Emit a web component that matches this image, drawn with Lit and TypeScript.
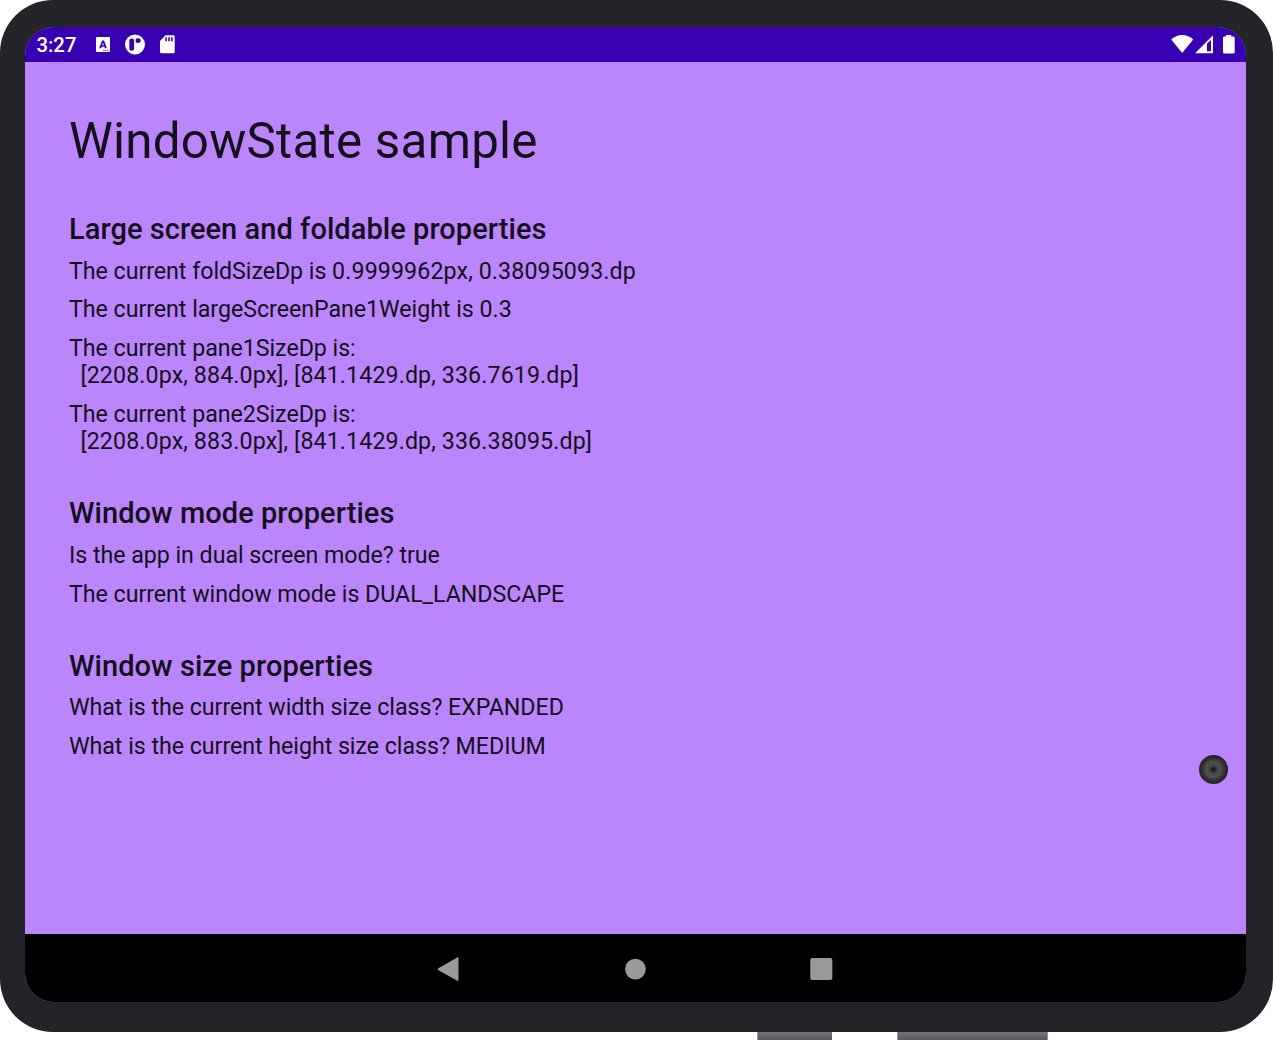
import { LitElement, html, css } from "lit";
import { customElement } from "lit/decorators.js";

const SECTIONS = [
  {
    title: "Large screen and foldable properties",
    lines: [
      "The current foldSizeDp is 0.9999962px, 0.38095093.dp",
      "The current largeScreenPane1Weight is 0.3",
      "The current pane1SizeDp is:\n  [2208.0px, 884.0px], [841.1429.dp, 336.7619.dp]",
      "The current pane2SizeDp is:\n  [2208.0px, 883.0px], [841.1429.dp, 336.38095.dp]",
    ],
  },
  {
    title: "Window mode properties",
    lines: ["Is the app in dual screen mode? true", "The current window mode is DUAL_LANDSCAPE"],
  },
  {
    title: "Window size properties",
    lines: [
      "What is the current width size class? EXPANDED",
      "What is the current height size class? MEDIUM",
    ],
  },
];

// Measured values are set slightly wider than the prose that introduces them.
const withValues = (text: string) =>
  text.split("\n").map(
    (row) =>
      html`<span class="row">${row
        .split(/(\[.*\]|\d+\.\d+.*$)/)
        .map((part, i) => (i % 2 ? html`<span class="value">${part}</span>` : part))}</span>`
  );

@customElement("status-bar")
class StatusBar extends LitElement {
  static styles = css`
    :host { display: flex; align-items: center; height: 35px; box-sizing: border-box; background: #3700b3; color: #fff; padding: 1px 10px 0 11.5px; }
    .time { font: 500 20.3px/34px Roboto, sans-serif; width: 55.5px; }
    svg { display: block; fill: #fff; }
    .spacer { flex: 1; }
  `;
  render() {
    return html`
      <span class="time">3:27</span>
      <svg width="90" height="34" viewBox="92 28 90 34">
        <rect x="96" y="37" width="14" height="15" rx="1" />
        <path d="M99.2 48.2 102.1 40.4h1.9l2.9 7.8h-2l-.5-1.5h-2.7l-.5 1.5zM102.2 45.2h1.7l-.85-2.5z" fill="#3700b3" />
        <path d="M103 50.3h6" stroke="#3700b3" stroke-width=".8" stroke-dasharray="1.3 .5" />
        <circle cx="135" cy="44.5" r="10" />
        <rect x="129.3" y="38.6" width="4.8" height="12.2" rx="2.2" fill="#3700b3" />
        <path d="M135.7 38.6h1.2v4h-1.2z" fill="#3700b3" />
        <circle cx="138.3" cy="40.7" r="2.4" fill="#3700b3" />
        <path d="M165.5 35.3h7.8q1.4 0 1.4 1.4v15.2q0 1.4-1.4 1.4h-11.8q-1.5 0-1.5-1.4V41z" />
        <path d="M165.3 37.2h1.6v4h-1.6zM168.2 37.2h1.6v4h-1.6zM171.1 37.2h1.6v4h-1.6z" fill="#3700b3" />
      </svg>
      <span class="spacer"></span>
      <svg width="66" height="34" viewBox="1170 28 66 34">
        <path d="M1182.2 53 1171.2 39.5Q1176 35 1182.2 35T1193.2 39.5z" />
        <path fill-rule="evenodd" d="M1195 53.3 1213 35.2V53.3zM1207 43.5V51.3H1211V40z" />
        <path d="M1226.2 35h5v1.6h2q1.5 0 1.5 1.4v14q0 1.5-1.5 1.5h-8.7q-1.5 0-1.5-1.5V38q0-1.4 1.5-1.4h1.7z" />
      </svg>
    `;
  }
}

@customElement("nav-bar")
class NavBar extends LitElement {
  static styles = css`
    :host { display: flex; justify-content: center; height: 68px; background: #000; }
    svg { display: block; fill: #9a9a9a; }
  `;
  render() {
    return html`
      <svg width="411" height="68" viewBox="430 934 411 68">
        <path d="M438.4 968.2 457.3 957.5q1.2-.5 1.2.8v21.7q0 1.3-1.2.8L438.4 970.2q-1.3-1 0-2z" />
        <circle cx="635.4" cy="969.1" r="10.4" />
        <rect x="810.3" y="958" width="22" height="22" rx="1.8" />
      </svg>
    `;
  }
}

@customElement("app-root")
class AppRoot extends LitElement {
  static styles = css`
    :host { display: block; width: 1273px; height: 1040px; background: #fff; overflow: hidden; font-family: Roboto, sans-serif; color: #140f1c; }
    .device { box-sizing: border-box; height: 1032px; padding: 27px 27px 30px 25px; background: #242329; border-radius: 53px; }
    .screen { display: flex; flex-direction: column; height: 975px; border-radius: 29px; overflow: hidden; background: #bb86fc; position: relative; }
    .content { flex: 1; box-sizing: border-box; padding: 50px 44px 0; }
    h1, h2, p { margin: 0; }
    h1 { font-size: 49.3px; font-weight: 400; line-height: 58px; letter-spacing: .27px; padding-bottom: 1.3px; }
    section { margin-top: 40.8px; }
    h2 { font-size: 29px; font-weight: 500; line-height: 34px; letter-spacing: .05px; }
    p { font-size: 23.2px; line-height: 27.15px; letter-spacing: -.03px; margin-top: 11.6px; white-space: pre; }
    .row { display: block; }
    .value { letter-spacing: .12px; }
    .camera { position: absolute; left: 1173.5px; top: 727.5px; width: 29px; height: 29px; border-radius: 50%; background: radial-gradient(circle closest-side, #111 0, #222 12%, #484848 30%, #505050 50%, #303030 78%, #202020 100%); }
    .keys { display: flex; gap: 65px; padding-left: 757px; }
    .key { height: 8px; background: linear-gradient(#747474, #585858); box-sizing: border-box; border-left: 1px solid #999; }
    .power { width: 75px; }
    .volume { width: 151px; border-right: 1px solid #999; }
  `;
  render() {
    return html`
      <div class="device">
        <div class="screen">
          <status-bar></status-bar>
          <main class="content">
            <h1>WindowState sample</h1>
            ${SECTIONS.map(
              (s) => html`<section><h2>${s.title}</h2>${s.lines.map((l) => html`<p>${withValues(l)}</p>`)}</section>`
            )}
          </main>
          <nav-bar></nav-bar>
          <div class="camera"></div>
        </div>
      </div>
      <div class="keys"><div class="key power"></div><div class="key volume"></div></div>
    `;
  }
}
